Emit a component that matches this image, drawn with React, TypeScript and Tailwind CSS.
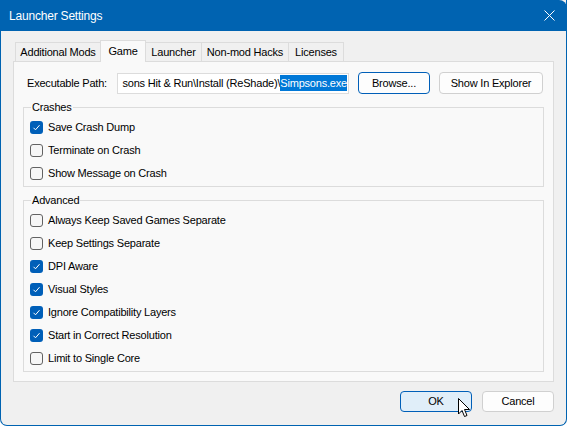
const TABS = [
  { label: "Additional Mods", width: "w-[86px]" },
  { label: "Game", width: "w-[46px]" },
  { label: "Launcher", width: "w-[57px]" },
  { label: "Non-mod Hacks", width: "w-[88px]" },
  { label: "Licenses", width: "w-[56px]" },
];

const CRASHES = [
  { label: "Save Crash Dump", checked: true },
  { label: "Terminate on Crash", checked: false },
  { label: "Show Message on Crash", checked: false },
];

const ADVANCED = [
  { label: "Always Keep Saved Games Separate", checked: false },
  { label: "Keep Settings Separate", checked: false },
  { label: "DPI Aware", checked: true },
  { label: "Visual Styles", checked: true },
  { label: "Ignore Compatibility Layers", checked: true },
  { label: "Start in Correct Resolution", checked: true },
  { label: "Limit to Single Core", checked: false },
];

function Checkbox({ label, checked }: { label: string; checked: boolean }) {
  return (
    <div className="flex h-[23px] items-center gap-[5px]">
      {checked ? (
        <span className="flex h-[13px] w-[13px] items-center justify-center rounded-[3px] bg-[#005fb8]">
          <svg width="9" height="9" viewBox="0 0 9 9">
            <path d="M1.5 4.8 L3.5 6.8 L7.5 2.2" fill="none" stroke="#fff" strokeWidth="1" />
          </svg>
        </span>
      ) : (
        <span className="h-[13px] w-[13px] rounded-[3px] border border-[#626262] bg-[#f6f6f6]" />
      )}
      <span>{label}</span>
    </div>
  );
}

function GroupBox({ title, children }: { title: string; children: React.ReactNode }) {
  return (
    <div className="relative mx-[9px] border border-[#dcdcdc] pb-[1px] pl-[6px] pt-[8px]">
      <span className="absolute -top-[9px] left-[7px] bg-[#f9f9f9] px-[1px] leading-[16px]">{title}</span>
      {children}
    </div>
  );
}

export default function App() {
  return (
    <div
      className="h-[426px] w-[567px] overflow-hidden bg-white text-[11px] tracking-[-0.2px] text-black"
      style={{ fontFamily: '"Liberation Sans", Arial, sans-serif' }}
    >
      <div className="flex h-full flex-col rounded-b-[7px] border-x border-b border-[#0063b1] bg-[#f0f0f0]">
        {/* title bar */}
        <div className="-mx-px flex h-[31px] shrink-0 items-center justify-between rounded-tr-[8px] bg-[#0063b1] pl-[9px] pr-[12px] text-[12px] text-white">
          <span>Launcher Settings</span>
          <svg width="11" height="11" viewBox="0 0 11 11">
            <path d="M0.5 0.5 L10.5 10.5 M10.5 0.5 L0.5 10.5" stroke="#fff" strokeWidth="1" />
          </svg>
        </div>

        {/* tabs */}
        <div className="mt-[10px] flex h-[20px] items-end pl-[14px]">
          {TABS.map((tab, i) =>
            tab.label === "Game" ? (
              <div
                key={tab.label}
                className={`relative z-10 -mb-px -ml-px flex h-[22px] items-start justify-center border border-b-0 border-[#dcdcdc] bg-[#f9f9f9] pt-[2px] ${tab.width}`}
              >
                {tab.label}
              </div>
            ) : (
              <div
                key={tab.label}
                className={`flex h-[19px] items-center justify-center border border-b-0 border-[#dcdcdc] bg-[#f0f0f0] ${tab.width} ${
                  i === 0 ? "" : "-ml-px"
                }`}
              >
                {tab.label}
              </div>
            )
          )}
        </div>

        {/* panel */}
        <div className="mx-[12px] flex h-[321px] flex-col border border-[#dcdcdc] bg-[#f9f9f9]">
          <div className="flex items-center whitespace-nowrap pl-[13px] pt-[10px]">
            <span className="w-[90px] shrink-0">Executable Path:</span>
            <div className="flex h-[21px] w-[232px] shrink-0 items-center justify-end border border-[#dcdcdc] bg-white pr-[1px]">
              <span className="shrink-0">sons Hit &amp; Run\Install (ReShade)\</span>
              <span className="shrink-0 bg-[#0078d7] text-white">Simpsons.exe</span>
            </div>
            <div className="ml-[9px] flex h-[22px] w-[72px] shrink-0 items-center justify-center rounded-[4px] border border-[#005fb8] bg-[#fdfdfd]">
              Browse...
            </div>
            <div className="ml-[9px] flex h-[22px] w-[104px] shrink-0 items-center justify-center rounded-[4px] border border-[#d0d0d0] bg-[#fdfdfd]">
              Show In Explorer
            </div>
          </div>

          <div className="mt-[13px]">
            <GroupBox title="Crashes">
              {CRASHES.map((c) => (
                <Checkbox key={c.label} {...c} />
              ))}
            </GroupBox>
          </div>

          <div className="mt-[13px]">
            <GroupBox title="Advanced">
              {ADVANCED.map((c) => (
                <Checkbox key={c.label} {...c} />
              ))}
            </GroupBox>
          </div>
        </div>

        {/* footer */}
        <div className="relative flex justify-end gap-[10px] pr-[12px] pt-[9px]">
          <div className="flex h-[21px] w-[72px] items-center justify-center rounded-[4px] border border-[#005fb8] bg-[#e0eef9]">
            OK
          </div>
          <div className="flex h-[21px] w-[72px] items-center justify-center rounded-[4px] border border-[#d0d0d0] bg-[#fdfdfd]">
            Cancel
          </div>
          <svg className="absolute left-[457px] top-[16px]" width="13" height="21" viewBox="0 0 13 21">
            <path d="M0.5 0.5 L0.5 16 L4 12.5 L6.5 18.5 L9 17.5 L6.5 11.5 L11.5 11.5 Z" fill="#fff" stroke="#000" strokeWidth="1" />
          </svg>
        </div>
      </div>
    </div>
  );
}
